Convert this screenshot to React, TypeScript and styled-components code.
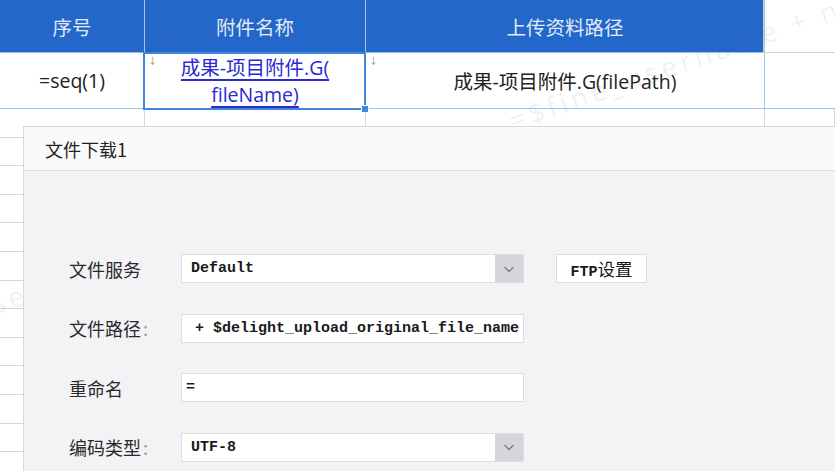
import React from 'react';
import styled, { createGlobalStyle } from 'styled-components';

const cjk = `"Noto Sans CJK SC", "Noto Sans", sans-serif`;
const ui = `"Open Sans", "Noto Sans CJK SC", sans-serif`;
const mono = `"Liberation Mono", "Noto Sans CJK SC", monospace`;

const GlobalStyle = createGlobalStyle`
  html, body {
    margin: 0;
    padding: 0;
    background: #fff;
    font-family: ${cjk};
  }
`;

const emptyRows = Array.from({ length: 13 }, (_, i) => i);

const marks = [
  { left: 514, top: 106 },
  { left: 140, top: 36 },
  { left: -139, top: 336 },
];

const ChevronDown = () => (
  <svg width="14" height="14" viewBox="0 0 14 14" fill="none">
    <path d="M2.5 5l4.5 4.5L11.5 5" stroke="#7a7a80" strokeWidth="1.3" />
  </svg>
);

const App = () => {
  return (
    <Page>
      <GlobalStyle />
      <Sheet>
        <HeaderCell>序号</HeaderCell>
        <HeaderCell>附件名称</HeaderCell>
        <HeaderCell>上传资料路径</HeaderCell>
        <BlankHeader />

        <DataCell>=seq(1)</DataCell>
        <DataCell selected>
          <Marker>↓</Marker>
          <LinkText>
            成果-项目附件.G(
            <br />
            fileName)
          </LinkText>
          <Handle />
        </DataCell>
        <DataCell>
          <Marker>↓</Marker>
          成果-项目附件.G(filePath)
        </DataCell>
        <DataCell last />

        {emptyRows.map((r) => (
          <React.Fragment key={r}>
            <GridCell />
            <GridCell />
            <GridCell />
            <GridCell />
          </React.Fragment>
        ))}
      </Sheet>

      {marks.map((m, i) => (
        <Watermark key={i} style={{ left: m.left, top: m.top }}>
          =$fine_username + now
        </Watermark>
      ))}

      <Dialog>
        <TitleBar>文件下载1</TitleBar>
        <Form>
          <Label>文件服务</Label>
          <Select>
            <SelectValue>Default</SelectValue>
            <Arrow>
              <ChevronDown />
            </Arrow>
          </Select>
          <FtpButton>
            <span>FTP</span>设置
          </FtpButton>

          <Label>
            文件路径<Colon>:</Colon>
          </Label>
          <Input> + $delight_upload_original_file_name</Input>
          <span />

          <Label>重命名</Label>
          <Input>=</Input>
          <span />

          <Label>
            编码类型<Colon>:</Colon>
          </Label>
          <Select>
            <SelectValue>UTF-8</SelectValue>
            <Arrow>
              <ChevronDown />
            </Arrow>
          </Select>
          <span />
        </Form>
      </Dialog>
    </Page>
  );
};

export default App;

const Page = styled.div`
  position: relative;
  width: 835px;
  height: 471px;
  overflow: hidden;
  background: #fff;
`;

const Sheet = styled.div`
  display: grid;
  grid-template-columns: 145px 221px 399px 1fr;
  grid-template-rows: 53px 56px repeat(13, 28.6px);
`;

const HeaderCell = styled.div`
  display: flex;
  align-items: center;
  justify-content: center;
  background: #2267c9;
  color: #e3eaf6;
  font-family: ${ui};
  font-size: 19.5px;
  border-right: 1px solid #a8c3e9;
  border-bottom: 1px solid #9dbbe6;
  box-sizing: border-box;
`;

const BlankHeader = styled.div`
  border-left: 1px solid #cfcfcf;
  border-bottom: 1px solid #d2d2d2;
  margin-left: -2px;
`;

const DataCell = styled.div<{ selected?: boolean; last?: boolean }>`
  position: relative;
  display: flex;
  align-items: center;
  justify-content: center;
  text-align: center;
  font-family: ${ui};
  font-size: 19.5px;
  color: #222;
  box-sizing: border-box;
  border-bottom: 1px solid #9cc5ec;
  border-right: ${(p) => (p.last ? 'none' : '1px solid #9cc5ec')};
  margin-left: ${(p) => (p.last ? '-1px' : '0')};
  border-left: ${(p) => (p.last ? '1px solid #9cc5ec' : 'none')};
  ${(p) =>
    p.selected &&
    `
    &::after {
      content: '';
      position: absolute;
      inset: -1px -1px -2px -2px;
      border: 2px solid #3d87e1;
      pointer-events: none;
    }
  `}
`;

const LinkText = styled.span`
  color: #2a2ad2;
  text-decoration: underline;
  text-decoration-thickness: 1.5px;
  text-underline-offset: 4px;
  line-height: 27px;
`;

const Marker = styled.span`
  position: absolute;
  top: 1px;
  left: 3px;
  font-size: 9px;
  color: #8a8a8a;
`;

const Handle = styled.span`
  position: absolute;
  right: -4px;
  bottom: -5px;
  width: 6px;
  height: 6px;
  background: #3d87e1;
  border: 1px solid #fff;
  z-index: 1;
`;

const GridCell = styled.div`
  box-sizing: border-box;
  border-right: 1px solid #d6d6d6;
  border-bottom: 1px solid #d6d6d6;
`;

const Watermark = styled.div`
  position: absolute;
  font-family: "Open Sans", "Noto Sans", sans-serif;
  font-size: 28px;
  line-height: 28px;
  letter-spacing: 4px;
  color: rgba(110, 110, 110, 0.1);
  transform: rotate(-19deg);
  transform-origin: left bottom;
  white-space: nowrap;
  pointer-events: none;
`;

const Dialog = styled.div`
  position: absolute;
  left: 23px;
  top: 126px;
  right: -10px;
  bottom: -10px;
  background: #f3f3f6;
  border: 1px solid #d9d9d9;
`;

const TitleBar = styled.div`
  height: 43px;
  display: flex;
  align-items: center;
  padding-left: 21px;
  background: #fafafa;
  border-bottom: 1px solid #dcdcdc;
  font-size: 18px;
  color: #222;
`;

const Form = styled.div`
  display: grid;
  grid-template-columns: 112px 343px auto;
  grid-auto-rows: 29px;
  row-gap: 30.5px;
  align-items: center;
  padding: 83px 0 0 45px;
`;

const Label = styled.div`
  font-size: 18px;
  color: #2a2a2a;
`;

const Colon = styled.span`
  color: #9a9a9a;
  margin-left: 2px;
`;

const Field = styled.div`
  height: 29px;
  box-sizing: border-box;
  background: #fff;
  border: 1px solid #dedede;
  display: flex;
  align-items: center;
  font-family: ${mono};
  font-size: 15px;
  font-weight: 700;
  color: #1a1a1a;
  white-space: pre;
  overflow: hidden;
`;

const Input = styled(Field)`
  padding-left: 4px;
`;

const Select = styled(Field)`
  padding-left: 0;
`;

const SelectValue = styled.span`
  flex: 1;
  padding-left: 9px;
`;

const Arrow = styled.span`
  width: 28px;
  height: 100%;
  display: flex;
  align-items: center;
  justify-content: center;
  background: #d6d6da;
`;

const FtpButton = styled.button`
  justify-self: start;
  margin-left: 32px;
  width: 91px;
  height: 29px;
  background: #fff;
  border: 1px solid #dedede;
  font-family: ${cjk};
  font-size: 17.5px;
  color: #1a1a1a;
  padding: 0;
  cursor: pointer;

  span {
    font-family: ${mono};
    font-weight: 700;
    font-size: 15px;
  }
`;
